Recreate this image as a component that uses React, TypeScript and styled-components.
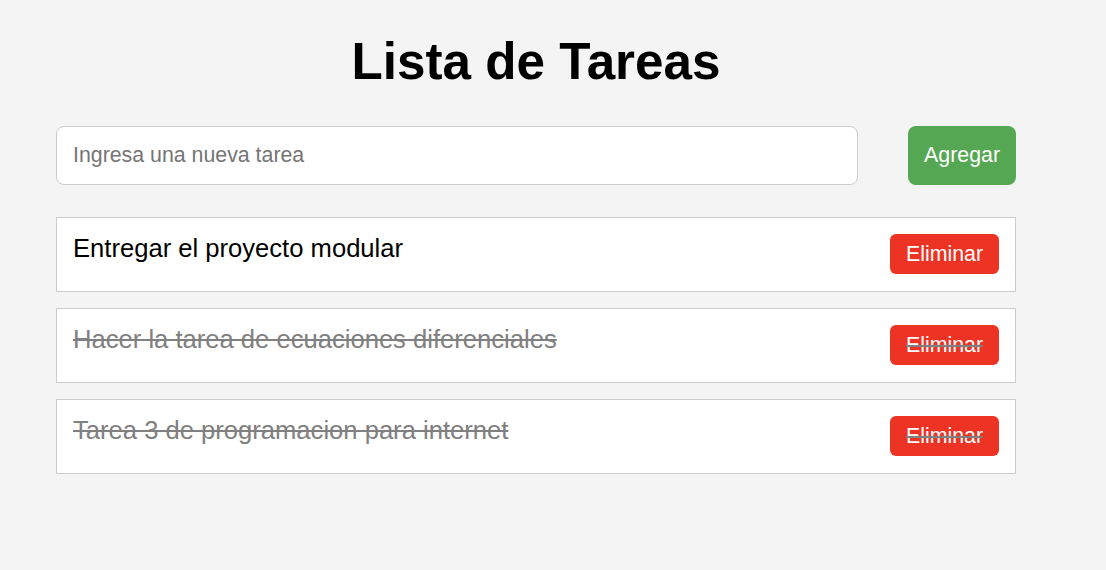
import React from "react";
import styled, { createGlobalStyle } from "styled-components";

const Global = createGlobalStyle`
  html, body { margin: 0; padding: 0; }
  body {
    background: #f4f4f4;
    font-family: "Liberation Sans", Arial, Helvetica, sans-serif;
    color: #000;
  }
`;

const Container = styled.div`
  width: 960px;
  margin-left: 56px;
  padding-top: 33px;
`;

const Title = styled.h1`
  margin: 0 0 35px;
  font-size: 51.2px;
  line-height: 58px;
  font-weight: bold;
  text-align: center;
`;

const Form = styled.form`
  display: flex;
  justify-content: space-between;
  align-items: stretch;
  margin: 0 0 32px;
`;

const Input = styled.input`
  box-sizing: border-box;
  width: 802px;
  height: 59px;
  padding: 0 16px;
  border: 1px solid #ccc;
  border-radius: 8px;
  background: #fff;
  font-family: inherit;
  font-size: 21.33px;
  color: #000;
  outline: none;
  &::placeholder { color: #757575; }
`;

const AddButton = styled.button`
  box-sizing: border-box;
  height: 59px;
  padding: 0 16px;
  border: none;
  border-radius: 8px;
  background: #55a753;
  color: #fff;
  font-family: inherit;
  font-size: 21.33px;
  cursor: pointer;
`;

const List = styled.ul`
  list-style: none;
  margin: 0;
  padding: 0;
  display: flex;
  flex-direction: column;
  gap: 16px;
`;

const Item = styled.li<{ $done: boolean }>`
  display: flex;
  justify-content: space-between;
  align-items: flex-start;
  padding: 16px;
  background: #fff;
  border: 1px solid #ccc;
  min-height: 41px;
`;

const ItemText = styled.span<{ $done: boolean }>`
  font-size: 25.6px;
  line-height: 29.4px;
  color: ${(p) => (p.$done ? "#808080" : "#000")};
  text-decoration: ${(p) => (p.$done ? "line-through" : "none")};
`;

const DeleteButton = styled.button<{ $done: boolean }>`
  box-sizing: border-box;
  height: 40px;
  padding: 0 16px;
  border: none;
  border-radius: 6px;
  background: #ec3324;
  color: #fff;
  font-family: inherit;
  font-size: 21.33px;
  cursor: pointer;
  text-decoration: ${(p) => (p.$done ? "line-through" : "none")};
  text-decoration-color: #808080;
  text-decoration-thickness: 2px;
`;

const tasks = [
  { text: "Entregar el proyecto modular", done: false },
  { text: "Hacer la tarea de ecuaciones diferenciales", done: true },
  { text: "Tarea 3 de programacion para internet", done: true },
];

export default function App() {
  return (
    <>
      <Global />
      <Container>
        <Title>Lista de Tareas</Title>
        <Form onSubmit={(e) => e.preventDefault()}>
          <Input placeholder="Ingresa una nueva tarea" />
          <AddButton type="submit">Agregar</AddButton>
        </Form>
        <List>
          {tasks.map((t) => (
            <Item key={t.text} $done={t.done}>
              <ItemText $done={t.done}>{t.text}</ItemText>
              <DeleteButton $done={t.done}>Eliminar</DeleteButton>
            </Item>
          ))}
        </List>
      </Container>
    </>
  );
}
